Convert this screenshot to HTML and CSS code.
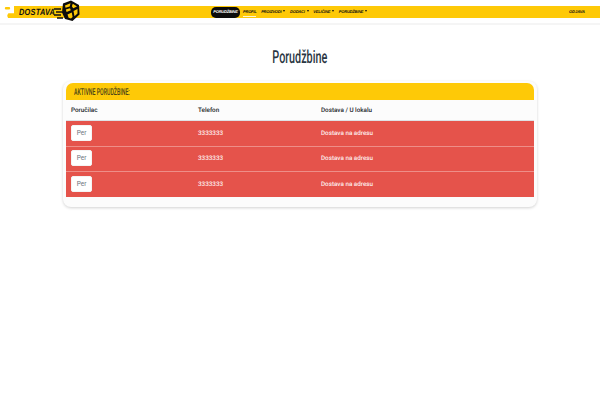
FILE: index.html
```html
<!DOCTYPE html>
<html lang="sr">
<head>
<meta charset="utf-8">
<title>Porudžbine</title>
<link rel="stylesheet" href="styles.css">
</head>
<body>
<header class="header">
  <nav class="navbar">
    <div class="logo">
      <svg class="logo-lead" width="20" height="20" viewBox="0 0 20 20">
        <path class="w" d="M0 0h14v13.500H0z"/>
        <path class="w" d="M0 13h8v6H0z"/>
        <path class="y" d="M6 7h3a1.200 1.200 0 0 1 0 2.400H6a1.200 1.200 0 0 1 0-2.400z"/>
        <path class="y" d="M9.500 13.500h5v4.500h-5a2.200 2.200 0 0 1 0-4.500z"/>
        <path class="y" d="M14 9h3v5h-3z"/>
      </svg>
      <span class="logo-text">DOSTAVA</span>
      <svg class="logo-fist" width="26" height="22" viewBox="0 0 26 22">
        <path d="M0 9h7M2 12h6M0 15h7M3 18h6" stroke="#111" stroke-width="1.400" fill="none"/>
        <path d="M9 3.500 17 .5l8 4.500.5 9.500-7 6.500-7.500-2-3-6.500z" fill="#0c0c0c"/>
        <path d="M11 5.500 16.500 3.300l-.8 3.200-4.200 1.200zM18.800 3.800l4.200 2.700-3.800 1.800-1.300-2zM11.800 9.500l4.200-1.200.8 2-4.200 1.700zM19.500 11l4-2v4.500l-3 2.800zM13.500 14.500l4.300-1.900.8 4.400-1.600 1.600-2.400-.8z" fill="#fec907"/>
      </svg>
    </div>
    <ul class="menu">
      <li class="pill">PORUDŽBINE</li>
      <li class="item active">PROFIL</li>
      <li class="item caret">PROIZVODI</li>
      <li class="item caret">DODACI</li>
      <li class="item caret">VELIČINE</li>
      <li class="item caret">PORUDŽBINE</li>
    </ul>
    <span class="login">ODJAVA</span>
  </nav>
</header>
<main class="main">
  <h1 class="title"><span class="title-text">Porudžbine</span></h1>
  <section class="card">
    <h2 class="card-head"><span class="card-head-text">AKTIVNE PORUDŽBINE:</span></h2>
    <table class="table">
      <thead>
        <tr><th class="c1">Poručilac</th><th class="c2">Telefon</th><th>Dostava / U lokalu</th></tr>
      </thead>
      <tbody>
        <tr><td><button class="btn">Per</button></td><td>3333333</td><td>Dostava na adresu</td></tr>
        <tr><td><button class="btn">Per</button></td><td>3333333</td><td>Dostava na adresu</td></tr>
        <tr><td><button class="btn">Per</button></td><td>3333333</td><td>Dostava na adresu</td></tr>
      </tbody>
    </table>
  </section>
</main>
</body>
</html>
```
FILE: styles.css
```css
* { box-sizing: border-box; }
html, body { margin: 0; padding: 0; }
body { background: #fff; font-family: Roboto, "Liberation Sans", sans-serif; color: #212529; height: 400px; overflow: hidden; text-rendering: geometricPrecision; }
.y { fill: #fec907; }
.w { fill: #fff; }
.header { height: 25px; padding-top: 6px; border-bottom: 2px solid #f5f5f5; }
.navbar { position: relative; height: 12px; background: #fec907; display: flex; align-items: center; }
.logo { width: 80px; height: 12px; flex: none; position: relative; }
.logo-lead { position: absolute; left: 0; top: -6px; }
.logo-text { position: absolute; left: 19px; top: 0; display: inline-block; transform: scaleX(.82); transform-origin: left center; font: italic 700 9px/12px "Liberation Sans", sans-serif; letter-spacing: .3px; color: #111; }
.logo-fist { position: absolute; left: 54px; top: -6px; }
.menu { list-style: none; margin: 0 0 0 131px; padding: 0; display: flex; align-items: center; gap: 4.700px; font: italic 700 4px/8px "Liberation Sans", sans-serif; letter-spacing: -.2px; color: #111; }
.pill { background: #0c0c0c; color: #fff; border-radius: 5px; width: 29px; height: 11px; margin-top: 1px; margin-right: -1.700px; text-align: center; line-height: 10px; white-space: nowrap; }
.item { white-space: nowrap; }
.active { border-bottom: 1px solid #fff6cf; }
.caret::after { content: ""; display: inline-block; margin-left: 2px; vertical-align: 1px; border-top: 2px solid #111; border-left: 1.500px solid transparent; border-right: 1.500px solid transparent; }
.login { margin-left: auto; margin-right: 15px; font: italic 700 4px/8px "Liberation Sans", sans-serif; color: #111; }
.main { padding: 0 63px; }
.title { margin: 23px 0 14px; height: 19px; text-align: center; font: 500 18px/19px Roboto, sans-serif; color: #2a3642; }
.title-text { display: inline-block; transform: scaleX(.6); }
.card { height: 126px; background: #fcfcfc; border-radius: 8px; padding: 2px 3px 3px; box-shadow: 0 1px 3px rgba(0,0,0,.18); }
.card-head { margin: 0; height: 17px; background: #fec907; border-radius: 7px 7px 0 0; padding: 1px 0 0 8px; font: 500 9.500px/17px Roboto, sans-serif; color: #4a4518; white-space: nowrap; }
.card-head-text { display: inline-block; transform: scaleX(.55); transform-origin: left center; }
.table { width: 100%; border-collapse: collapse; font-size: 6.300px; }
.table th { height: 20px; padding: 0 5px; text-align: left; font-weight: 500; color: #212529; border-bottom: 1px solid #dee2e6; }
.table .c1 { width: 127px; }
.table .c2 { width: 123px; }
.table td { height: 25.500px; padding: 0 5px 1px; background: #e5534b; color: #fdeeee; font-weight: 500; border-top: 1px solid #ee8e88; }
.table tbody tr:first-child td { height: 26px; border-top: 0; padding-bottom: 0; }
.btn { display: block; width: 21px; height: 16px; padding: 0; background: #fff; border: 1px solid #f4f4f4; border-radius: 2px; font: 400 6.500px/14px Roboto, sans-serif; color: #6c757d; }
```
